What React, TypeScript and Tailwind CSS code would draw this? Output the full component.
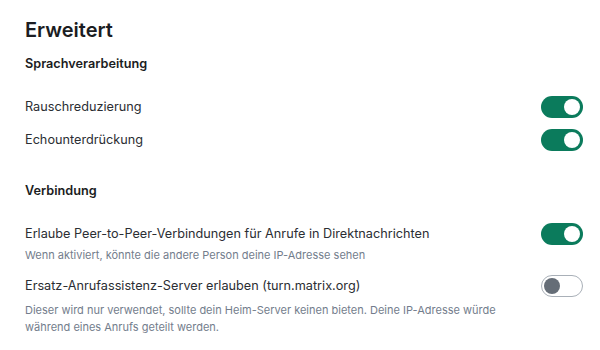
import React from 'react'

function Toggle({ on }: { on: boolean }) {
  if (on) {
    return (
      <div className="-mt-[2px] flex h-[22px] w-[42px] shrink-0 items-center justify-end rounded-full bg-[#0b7b5c] p-[3px]">
        <div className="h-4 w-4 rounded-full bg-white" />
      </div>
    )
  }
  return (
    <div className="-mt-[2px] flex h-[22px] w-[42px] shrink-0 items-center rounded-full border border-[#a9b0b8] bg-white p-[2px]">
      <div className="h-4 w-4 rounded-full bg-[#656d77]" />
    </div>
  )
}

function Row({
  label,
  desc,
  on,
  descGap = 'mt-[4px]',
}: {
  label: string
  desc?: React.ReactNode
  on: boolean
  descGap?: string
}) {
  return (
    <div className="flex items-start justify-between gap-6">
      <div className="flex flex-col">
        <div className="text-[12.7px] leading-[18px] text-[#2b2e33]">{label}</div>
        {desc && <div className={`${descGap} text-[11px] leading-[17px] text-[#737d8c]`}>{desc}</div>}
      </div>
      <Toggle on={on} />
    </div>
  )
}

export default function App() {
  return (
    <div className="h-[350px] w-[600px] bg-white pl-[25px] pr-[17px] pt-[16px] font-['Inter',sans-serif]">
      <h1 className="text-[20px] font-semibold leading-[28px] text-[#1b1d22]">Erweitert</h1>
      <h2 className="mt-[11px] text-[12.7px] font-semibold leading-[18px] text-[#1b1d22]">Sprachverarbeitung</h2>
      <div className="mt-[25px] flex flex-col gap-[13px]">
        <Row label="Rauschreduzierung" on />
        <Row label="Echounterdrückung" on />
      </div>
      <h2 className="mt-[31px] text-[12.7px] font-semibold leading-[18px] text-[#1b1d22]">Verbindung</h2>
      <div className="mt-[25px] flex flex-col gap-[13px]">
        <Row
          label="Erlaube Peer-to-Peer-Verbindungen für Anrufe in Direktnachrichten"
          desc="Wenn aktiviert, könnte die andere Person deine IP-Adresse sehen"
          on
        />
        <Row
          label="Ersatz-Anrufassistenz-Server erlauben (turn.matrix.org)"
          descGap="mt-[7px]"
          desc={
            <>
              Dieser wird nur verwendet, sollte dein Heim-Server keinen bieten. Deine IP-Adresse würde
              <br />
              während eines Anrufs geteilt werden.
            </>
          }
          on={false}
        />
      </div>
    </div>
  )
}
